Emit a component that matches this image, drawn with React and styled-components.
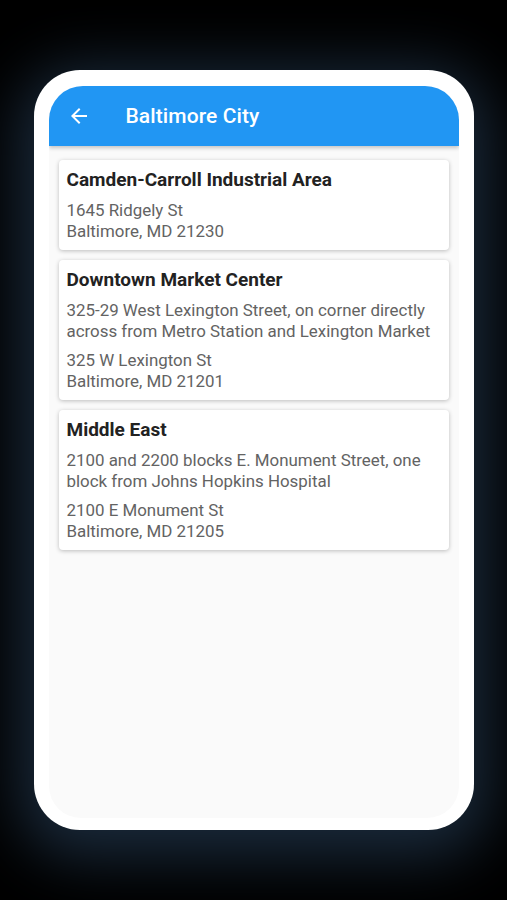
import React from 'react';
import styled, { createGlobalStyle } from 'styled-components';
import { MdArrowBack } from 'react-icons/md';

const GlobalStyle = createGlobalStyle`
  html, body {
    margin: 0;
    padding: 0;
    background: #000;
  }
  body {
    font-family: Roboto, "Noto Sans", sans-serif;
  }
`;

const Page = styled.div`
  width: 507px;
  height: 900px;
  background: #000;
  display: flex;
  justify-content: center;
  padding-top: 70px;
  box-sizing: border-box;
`;

const Frame = styled.div`
  width: 440px;
  height: 760px;
  box-sizing: border-box;
  padding: 16px 15px 12px;
  background: #ffffff;
  border-radius: 46px;
  box-shadow: 0 12px 60px 16px rgba(32, 52, 74, 0.8);
  display: flex;
`;

const Screen = styled.div`
  flex: 1;
  display: flex;
  flex-direction: column;
  background: #fafafa;
  border-radius: 34px 34px 32px 32px;
  overflow: hidden;
`;

const AppBar = styled.header`
  height: 60px;
  flex-shrink: 0;
  background: #2196f3;
  display: flex;
  align-items: center;
  padding-left: 18px;
  color: #fff;
  box-shadow: 0 2px 4px rgba(0, 0, 0, 0.22);
  position: relative;
  z-index: 1;
`;

const BackButton = styled.button`
  border: 0;
  background: transparent;
  color: #fff;
  padding: 0;
  width: 24px;
  height: 24px;
  display: flex;
  align-items: center;
  justify-content: center;
  cursor: pointer;
`;

const Title = styled.h1`
  margin: 0 0 0 35px;
  font-size: 21px;
  font-weight: 500;
  letter-spacing: 0.1px;
`;

const List = styled.div`
  display: flex;
  flex-direction: column;
  gap: 10px;
  padding: 14px 10px;
`;

const Card = styled.div`
  background: #fff;
  border-radius: 4px;
  padding: 8px;
  box-shadow: 0 1px 4px rgba(0, 0, 0, 0.25);
  display: flex;
  flex-direction: column;
  gap: 8px;
`;

const CardTitle = styled.div`
  font-size: 19px;
  line-height: 24px;
  font-weight: 700;
  color: #222;
`;

const Text = styled.div`
  font-size: 16.9px;
  line-height: 21px;
  color: #636363;
`;

const places = [
  {
    name: 'Camden-Carroll Industrial Area',
    street: '1645 Ridgely St',
    city: 'Baltimore, MD 21230',
  },
  {
    name: 'Downtown Market Center',
    note: '325-29 West Lexington Street, on corner directly across from Metro Station and Lexington Market',
    street: '325 W Lexington St',
    city: 'Baltimore, MD 21201',
  },
  {
    name: 'Middle East',
    note: '2100 and 2200 blocks E. Monument Street, one block from Johns Hopkins Hospital',
    street: '2100 E Monument St',
    city: 'Baltimore, MD 21205',
  },
];

const App = () => (
  <>
    <GlobalStyle />
    <Page>
      <Frame>
        <Screen>
          <AppBar>
            <BackButton aria-label="Back">
              <MdArrowBack size={24} />
            </BackButton>
            <Title>Baltimore City</Title>
          </AppBar>
          <List>
            {places.map((p) => (
              <Card key={p.name}>
                <CardTitle>{p.name}</CardTitle>
                {p.note && <Text>{p.note}</Text>}
                <Text>
                  {p.street}
                  <br />
                  {p.city}
                </Text>
              </Card>
            ))}
          </List>
        </Screen>
      </Frame>
    </Page>
  </>
);

export default App;
